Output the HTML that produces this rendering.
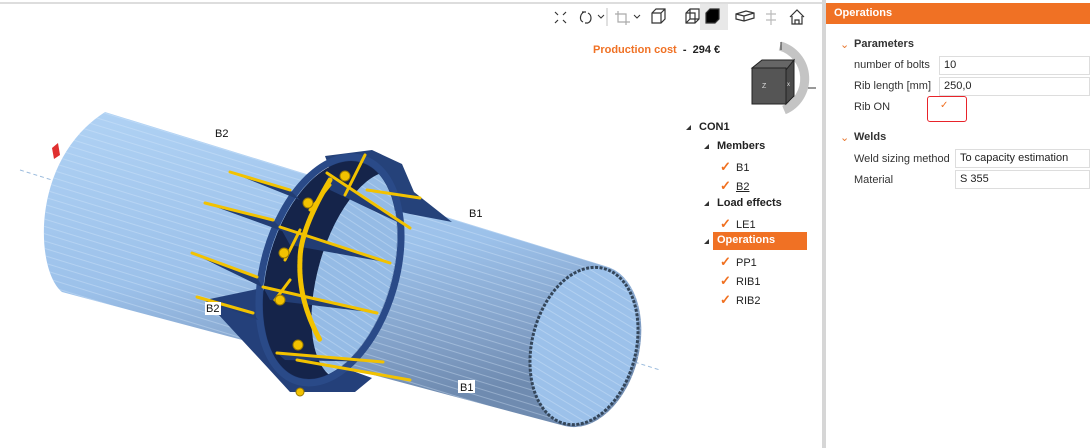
<!DOCTYPE html>
<html><head><meta charset="utf-8"><style>
*{margin:0;padding:0;box-sizing:border-box}
body{width:1090px;height:448px;background:#fff;font-family:"Liberation Sans",sans-serif;font-size:11px;color:#222;position:relative;overflow:hidden}
.abs{position:absolute}
.tree div{position:absolute;font-size:11px;white-space:nowrap}
.chk{color:#f07020;font-size:13px;font-weight:bold;display:inline-block;width:16px}
.b{font-weight:bold}
.tri{display:inline-block;width:0;height:0;border-left:5px solid transparent;border-bottom:5px solid #333;margin-right:8px;vertical-align:middle}
.inp{position:absolute;height:19px;border:1px solid #ddd;background:#fff;padding:2px 4px;font-size:11px}
.lbl{position:absolute;font-size:11px;color:#333}
.chev{position:absolute;color:#e87830;font-size:11px}
</style></head><body>
<div class="abs" style="left:0;top:2px;width:822px;height:2px;background:#ddd"></div>
<div class="abs" style="left:822px;top:0;width:4px;height:448px;background:#d6d6d6"></div>
<div class="abs" style="left:826px;top:3px;width:264px;height:21px;background:#f07124;color:#fff;font-weight:bold;padding:4px 8px;font-size:11px">Operations</div>

<svg class="abs" style="left:540px;top:4px" width="280" height="26" viewBox="0 0 280 26" fill="none" stroke="#333" stroke-width="1.2">
<rect x="160" y="0" width="28" height="26" fill="#e8e8e8" stroke="none"/>
<path d="M15 8l3 3M26 8l-3 3M15 19l3-3M26 19l-3-3"/>
<path d="M44 8c-4 2-5 8-1 10M48 9c4 2 4 8 0 10M42 8l4 0M48 19l-3 0"/>
<path d="M58 11l3 3 3-3" stroke-width="1"/>
<path d="M67 4v18" stroke="#ccc"/>
<path d="M78 7v11h12M75 10h11v11" stroke="#aaa"/>
<path d="M94 11l3 3 3-3" stroke-width="1"/>
<path d="M112 9l4-4h9v10l-4 4h-9zM112 9h9v10M121 9l4-4"/>
<path d="M146 9l4-4h9v10l-4 4h-9zM146 9h9v10M150 5v10h9M150 15l-4 4"/>
<path d="M166 9l4-4h9v10l-4 4h-9z" fill="#000"/>
<path d="M196 10l10-3 8 2v5l-10 3-8-2zM196 10l8 2 10-3M204 12v5"/>
<path d="M231 6v15M226 10h10M226 16h10" stroke="#bbb"/>
<path d="M250 13l7-7 7 7M252 12v8h10v-8M255 20v-4h4v4"/>
</svg>

<div class="abs" style="left:593px;top:44px;font-size:11px;font-weight:bold"><span style="color:#f07124">Production cost</span><span style="color:#222">&nbsp; - &nbsp;294 €</span></div>

<svg class="abs" style="left:740px;top:40px" width="80" height="75">
<path d="M40 6 A34 34 0 0 1 44 70" stroke="#c4c4c4" stroke-width="9" fill="none"/>
<path d="M12 28l10-8 32 0-8 10z" fill="#666" stroke="#222"/>
<path d="M12 28h34v36h-34z" fill="#555" stroke="#222"/>
<path d="M46 30l8-10v36l-8 8z" fill="#4a4a4a" stroke="#222"/>
<text x="22" y="48" font-size="7" fill="#ddd">Z</text><text x="47" y="46" font-size="6" fill="#ddd">x</text>
<path d="M41 2v8M68 48h8" stroke="#333"/>
</svg>

<svg class="abs" style="left:0;top:0" width="680" height="448">
<defs>
<linearGradient id="pg" x1="0" y1="0" x2="0.25" y2="1">
<stop offset="0" stop-color="#b0d2f4"/><stop offset="0.55" stop-color="#9cc1ea"/><stop offset="0.85" stop-color="#819fc6"/><stop offset="1" stop-color="#6f8bb0"/></linearGradient>
<pattern id="st" width="7" height="7" patternUnits="userSpaceOnUse" patternTransform="rotate(17)">
<rect width="7" height="1" fill="#d8eafc" opacity="0.35"/></pattern>
<clipPath id="fc"><ellipse cx="330" cy="270" rx="62" ry="112" transform="rotate(16 330 270)"/></clipPath>
</defs>
<line x1="20" y1="170" x2="660" y2="370" stroke="#9bbbdd" stroke-dasharray="4 3"/>
<path d="M52 148l6-5 2 12-6 4z" fill="#e03030"/>
<path d="M105 112 L605 266 A54 82 14 0 1 565 426 L62 292 C35 270 30 160 105 112Z" fill="url(#pg)"/>
<path d="M105 112 L605 266 A54 82 14 0 1 565 426 L62 292 C35 270 30 160 105 112Z" fill="url(#st)"/>
<ellipse cx="584" cy="346" rx="52" ry="80" transform="rotate(14 584 346)" fill="#9cc1ea" stroke="#34465a" stroke-width="3" stroke-dasharray="3 1.5"/>
<ellipse cx="584" cy="346" rx="50" ry="78" transform="rotate(14 584 346)" fill="url(#st)"/>
<path d="M325 156 L372 150 L402 164 L414 192 L452 222 L410 214 L340 198Z" fill="#25427a"/>
<path d="M205 300 L262 288 L300 352 L372 378 L355 392 L290 392 L268 368Z" fill="#24407a"/>
<ellipse cx="330" cy="270" rx="62" ry="112" transform="rotate(16 330 270)" fill="#15244a"/>
<g clip-path="url(#fc)"><ellipse cx="368" cy="276" rx="50" ry="108" transform="rotate(16 368 276)" fill="#95bbe5"/>
<ellipse cx="368" cy="276" rx="50" ry="108" transform="rotate(16 368 276)" fill="url(#st)"/></g>
<ellipse cx="330" cy="270" rx="66" ry="116" transform="rotate(16 330 270)" fill="none" stroke="#2a4a88" stroke-width="7"/>
<g fill="#223d74">
<path d="M230 172 L290 190 L300 200 Z"/><path d="M205 203 L273 220 L285 232Z"/>
<path d="M192 253 L257 277 L262 287Z"/><path d="M197 297 L253 313 L258 320Z"/>
<path d="M327 173 L410 228 L330 190Z"/><path d="M280 227 L390 263 L290 245Z"/>
<path d="M263 287 L377 313 L270 300Z"/><path d="M277 353 L383 362 L285 360Z"/>
</g>
<g stroke="#f2c200" stroke-width="3" stroke-linecap="round">
<path d="M230 172L290 190M205 203L273 220M192 253L257 277M197 297L253 313"/>
<path d="M327 173L410 228M280 227L390 263M263 287L377 313M277 353L383 362M367 190L420 198M297 360L410 380M365 155L345 195M310 210L330 185M285 260L300 230M275 300L290 280"/>
<path d="M330 180 Q300 230 300 260 Q298 300 320 340" stroke-width="5" fill="none" stroke-dasharray="4 1"/>
</g>
<g fill="#f2c200" stroke="#9a7a00" stroke-width="1">
<circle cx="345" cy="176" r="5"/><circle cx="308" cy="203" r="5"/><circle cx="284" cy="253" r="5"/><circle cx="280" cy="300" r="5"/><circle cx="298" cy="345" r="5"/><circle cx="300" cy="392" r="4"/></g>
<g font-family="Liberation Sans" font-size="11" fill="#111">
<text x="215" y="137">B2</text><text x="469" y="217">B1</text>
<rect x="205" y="302" width="16" height="13" fill="#fff"/><text x="206" y="312">B2</text>
<rect x="458" y="380" width="17" height="13" fill="#fff"/><text x="460" y="391">B1</text>
</g>
</svg>

<div class="tree">
<div style="left:686px;top:121px"><span class="tri"></span><span class="b">CON1</span></div>
<div style="left:704px;top:140px"><span class="tri"></span><span class="b">Members</span></div>
<div style="left:720px;top:159px"><span class="chk">✓</span>B1</div>
<div style="left:720px;top:178px"><span class="chk">✓</span><u>B2</u></div>
<div style="left:704px;top:197px"><span class="tri"></span><span class="b">Load effects</span></div>
<div style="left:720px;top:216px"><span class="chk">✓</span>LE1</div>
<div style="left:704px;top:235px"><span class="tri"></span></div>
<div style="left:713px;top:232px;width:94px;height:18px;background:#f07124;color:#fff;font-weight:bold;padding:2px 4px">Operations</div>
<div style="left:720px;top:254px"><span class="chk">✓</span>PP1</div>
<div style="left:720px;top:273px"><span class="chk">✓</span>RIB1</div>
<div style="left:720px;top:292px"><span class="chk">✓</span>RIB2</div>
</div>

<div class="chev" style="left:840px;top:38px">&#8964;</div>
<div class="lbl b" style="left:854px;top:38px;font-weight:bold">Parameters</div>
<div class="lbl" style="left:854px;top:59px">number of bolts</div>
<div class="inp" style="left:939px;top:56px;width:151px">10</div>
<div class="lbl" style="left:854px;top:80px">Rib length [mm]</div>
<div class="inp" style="left:939px;top:77px;width:151px">250,0</div>
<div class="lbl" style="left:854px;top:101px">Rib ON</div>
<div class="abs" style="left:927px;top:96px;width:40px;height:26px;border:1.5px solid #e8232a;border-radius:3px"></div>
<div class="abs" style="left:940px;top:100px;color:#f07124;font-size:10px">✓</div>
<div class="chev" style="left:840px;top:131px">&#8964;</div>
<div class="lbl b" style="left:854px;top:131px;font-weight:bold">Welds</div>
<div class="lbl" style="left:854px;top:153px">Weld sizing method</div>
<div class="inp" style="left:955px;top:149px;width:135px">To capacity estimation</div>
<div class="lbl" style="left:854px;top:174px">Material</div>
<div class="inp" style="left:955px;top:170px;width:135px">S 355</div>
</body></html>
